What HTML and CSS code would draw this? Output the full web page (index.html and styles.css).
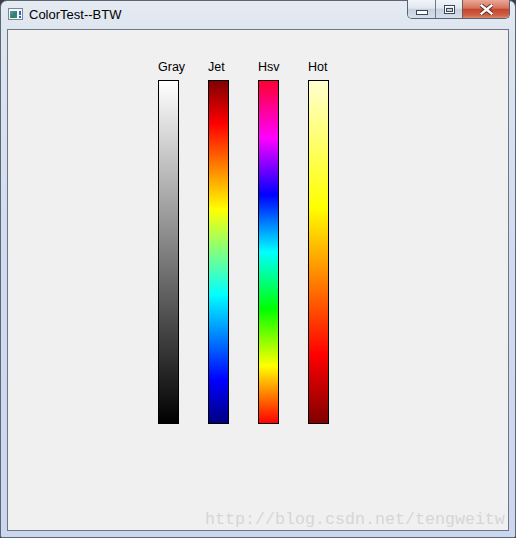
FILE: index.html
```html
<!DOCTYPE html>
<html>
<head>
<meta charset="utf-8">
<title>ColorTest--BTW</title>
<link rel="stylesheet" href="styles.css">
</head>
<body>
<div class="window">
  <div class="titlebar">
    <svg class="app-icon" width="15" height="12" viewBox="0 0 15 12">
      <defs>
        <linearGradient id="ig" x1="0" y1="0" x2="1" y2="1">
          <stop offset="0" stop-color="#5a9ec4"/>
          <stop offset="0.6" stop-color="#2f7d6a"/>
          <stop offset="1" stop-color="#3f9a52"/>
        </linearGradient>
      </defs>
      <rect x="0.5" y="0.5" width="14" height="11" fill="#f4f6f8" stroke="#7c8794"/>
      <rect x="2" y="3" width="7" height="7" fill="url(#ig)"/>
      <rect x="11" y="3" width="2" height="4" fill="#2a63c4"/>
      <rect x="11" y="8" width="2" height="2" fill="#2a63c4"/>
    </svg>
    <span class="title">ColorTest--BTW</span>
    <div class="caption-buttons">
      <div class="cbtn min">
        <svg width="12" height="5" viewBox="0 0 12 5"><rect x="0.5" y="0.5" width="11" height="4" fill="#fff" stroke="#3b4658"/></svg>
      </div>
      <div class="cbtn max">
        <svg width="11" height="9" viewBox="0 0 11 9"><rect x="0.5" y="0.5" width="10" height="8" fill="none" stroke="#3b4658"/><rect x="1.5" y="1.5" width="8" height="6" fill="none" stroke="#fff"/><rect x="2.5" y="3.5" width="6" height="3" fill="#c9d1dc" stroke="#3b4658"/></svg>
      </div>
      <div class="cbtn close">
        <svg width="13" height="11" viewBox="0 0 13 11"><path d="M1.5 1.5 L11.5 9.5 M11.5 1.5 L1.5 9.5" stroke="#5a2a22" stroke-width="4.2" stroke-linecap="square" fill="none"/><path d="M1.5 1.5 L11.5 9.5 M11.5 1.5 L1.5 9.5" stroke="#fff" stroke-width="2.4" stroke-linecap="square" fill="none"/></svg>
      </div>
    </div>
  </div>
  <div class="client">
    <div class="maps">
      <div class="map"><div class="label">Gray</div><div class="bar gray"></div></div>
      <div class="map"><div class="label">Jet</div><div class="bar jet"></div></div>
      <div class="map"><div class="label">Hsv</div><div class="bar hsv"></div></div>
      <div class="map"><div class="label">Hot</div><div class="bar hot"></div></div>
    </div>
  </div>
</div>
<div class="watermark">http://blog.csdn.net/tengweitw</div>
</body>
</html>
```

FILE: styles.css
```css
html, body {
  margin: 0;
  padding: 0;
}
body {
  position: relative;
  width: 516px;
  height: 538px;
  background: #3a3f48;
  overflow: hidden;
}
.window {
  box-sizing: border-box;
  width: 516px;
  height: 538px;
  border: 1px solid #5d6673;
  border-radius: 7px 7px 2px 2px;
  padding: 0 6px 6px 6px;
  background: linear-gradient(to bottom, #e6ebf2 0px, #dde5f0 30px, #cfdbf0 260px, #cad7ef 100%);
  display: flex;
  flex-direction: column;
}
.titlebar {
  height: 28px;
  display: flex;
  align-items: flex-start;
  padding-left: 1px;
}
.app-icon {
  margin-top: 7px;
  flex: none;
}
.title {
  margin-top: 6px;
  margin-left: 6px;
  font-family: "Liberation Sans", Arial, sans-serif;
  font-size: 13px;
  line-height: 15px;
  color: #000;
}
.caption-buttons {
  margin-left: auto;
  margin-right: -1px;
  margin-top: -1px;
  display: flex;
  border: 1px solid #57647a;
  border-top: none;
  border-radius: 0 0 5px 5px;
  overflow: hidden;
  height: 18px;
}
.cbtn {
  display: flex;
  align-items: center;
  justify-content: center;
  height: 18px;
}
.cbtn.min {
  width: 27px;
  border-right: 1px solid #6d7a8d;
  background: linear-gradient(to bottom, #f2f4f8 0%, #e2e8f0 45%, #c8d1de 52%, #d6dee9 100%);
}
.cbtn.min svg { margin-top: 6px; }
.cbtn.max {
  width: 26px;
  border-right: 1px solid #6d5e5a;
  background: linear-gradient(to bottom, #f2f4f8 0%, #e2e8f0 45%, #c8d1de 52%, #d6dee9 100%);
}
.cbtn.close {
  width: 46px;
  background: linear-gradient(to bottom, #e9a896 0%, #d7735d 45%, #c4472f 52%, #d06145 85%, #dd8a6c 100%);
}
.client {
  box-sizing: border-box;
  height: 502px;
  border: 1px solid #6e7683;
  background: #f0f0f0;
}
.maps {
  display: flex;
  gap: 29px;
  padding-left: 150px;
  padding-top: 30px;
}
.map {
  width: 21px;
  display: flex;
  flex-direction: column;
}
.label {
  font-family: "Liberation Sans", Arial, sans-serif;
  font-size: 12.5px;
  line-height: 14px;
  height: 14px;
  white-space: nowrap;
  color: #000;
}
.bar {
  box-sizing: border-box;
  margin-top: 6px;
  width: 21px;
  height: 344px;
  border: 1px solid #000;
}
.bar.gray {
  background: linear-gradient(to bottom, #ffffff, #000000);
}
.bar.jet {
  background: linear-gradient(to bottom, #800000 0%, #ff0000 12.5%, #ffff00 37.5%, #00ffff 62.5%, #0000ff 87.5%, #000080 100%);
}
.bar.hsv {
  background: linear-gradient(to bottom, #ff0030 0%, #ff00ff 16.7%, #0000ff 33.3%, #00ffff 50%, #00ff00 66.7%, #ffff00 83.3%, #ff0000 100%);
}
.bar.hot {
  background: linear-gradient(to bottom, #ffffd0 0%, #ffff00 37%, #ff0000 80%, #800000 100%);
}
.watermark {
  position: absolute;
  left: 205px;
  top: 511px;
  font-family: "Liberation Mono", "Courier New", monospace;
  font-size: 16.67px;
  line-height: 17px;
  color: #d6d6d6;
  white-space: nowrap;
}
```
